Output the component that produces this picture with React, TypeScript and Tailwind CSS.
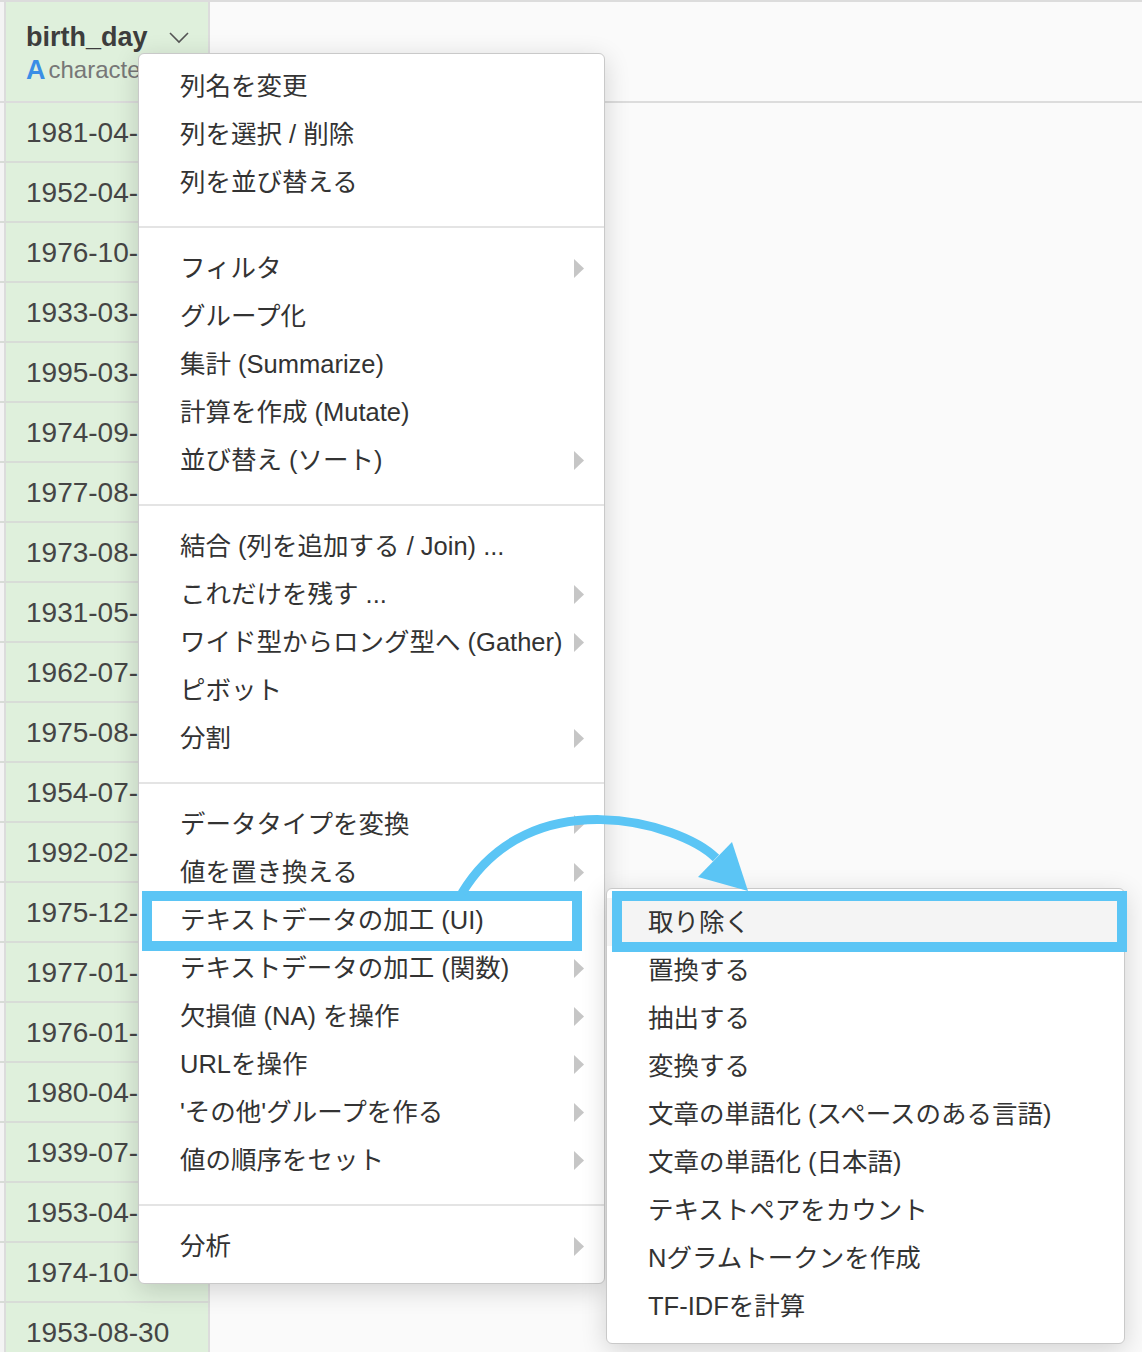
const FONT = 'font-["Liberation_Sans","Noto_Sans_CJK_JP",sans-serif]';

const dates = [
  '1981-04-12', '1952-04-03', '1976-10-21', '1933-03-09', '1995-03-17', '1974-09-28', '1977-08-05',
  '1973-08-14', '1931-05-30', '1962-07-19', '1975-08-08', '1954-07-25', '1992-02-11', '1975-12-02',
  '1977-01-16', '1976-01-27', '1980-04-06', '1939-07-13', '1953-04-22', '1974-10-01', '1953-08-30',
];

type Item = { label: string; sub?: boolean; mark?: boolean };

const sections: Item[][] = [
  [{ label: '列名を変更' }, { label: '列を選択 / 削除' }, { label: '列を並び替える' }],
  [
    { label: 'フィルタ', sub: true },
    { label: 'グループ化' },
    { label: '集計 (Summarize)' },
    { label: '計算を作成 (Mutate)' },
    { label: '並び替え (ソート)', sub: true },
  ],
  [
    { label: '結合 (列を追加する / Join) ...' },
    { label: 'これだけを残す ...', sub: true },
    { label: 'ワイド型からロング型へ (Gather)', sub: true },
    { label: 'ピボット' },
    { label: '分割', sub: true },
  ],
  [
    { label: 'データタイプを変換', sub: true },
    { label: '値を置き換える', sub: true },
    { label: 'テキストデータの加工 (UI)', mark: true },
    { label: 'テキストデータの加工 (関数)', sub: true },
    { label: '欠損値 (NA) を操作', sub: true },
    { label: 'URLを操作', sub: true },
    { label: "'その他'グループを作る", sub: true },
    { label: '値の順序をセット', sub: true },
  ],
  [{ label: '分析', sub: true }],
];

const subItems = [
  '取り除く',
  '置換する',
  '抽出する',
  '変換する',
  '文章の単語化 (スペースのある言語)',
  '文章の単語化 (日本語)',
  'テキストペアをカウント',
  'Nグラムトークンを作成',
  'TF-IDFを計算',
];

export default function App() {
  return (
    <div
      className={`relative h-[1352px] w-[1142px] overflow-hidden border-t-2 border-[#dcdcdc] bg-[#fafafa] ${FONT}`}
    >
      {/* header row */}
      <div className="flex h-[101px] border-b-2 border-[#dcdcdc]">
        <div className="w-[4px] shrink-0 bg-[#f4f4f4]" />
        <div className="w-[206px] shrink-0 border-x-2 border-[#dcdcdc] bg-[#dff0dc] pl-[20px] pt-[19px]">
          <div className="flex h-[32px] items-center">
            <span className="text-[27px] font-bold leading-[32px] text-[#3d3d3d]">birth_day</span>
            <svg width="22" height="14" viewBox="0 0 22 14" className="ml-[20px] mt-[2px]" aria-hidden>
              <path d="M2 2 L11 11 L20 2" fill="none" stroke="#555" strokeWidth="1.6" />
            </svg>
          </div>
          <div className="mt-[3px] flex h-[28px] items-center whitespace-nowrap">
            <span className="text-[27px] font-bold leading-[28px] text-[#3a8ee6]">A</span>
            <span className="ml-[3px] text-[24px] leading-[28px] text-[#777]">character</span>
          </div>
        </div>
        <div className="flex-1" />
      </div>

      {/* data rows */}
      {dates.map((d) => (
        <div key={d} className="flex h-[60px] w-[210px] border-b-2 border-[#d8dcd7]">
          <div className="w-[4px] shrink-0 bg-[#f4f4f4]" />
          <div className="flex flex-1 items-center border-x-2 border-[#dcdcdc] bg-[#dff0dc] pl-[20px] pt-[2px] text-[28px] text-[#454545]">
            {d}
          </div>
        </div>
      ))}

      {/* column menu */}
      <div className="absolute left-[138px] top-[51px] w-[467px] rounded-[6px] border border-[#c9c9c9] bg-white pb-[13px] pt-[8px] shadow-[0_6px_26px_rgba(0,0,0,0.16)]">
        {sections.map((sec, i) => (
          <div key={i}>
            {i > 0 && <div className="mb-[16px] mt-[20px] h-[2px] bg-[#e4e4e4]" />}
            {sec.map((it) => (
              <div
                key={it.label}
                className="relative flex h-[48px] items-center justify-between pl-[41px] pr-[20px] text-[25.5px] text-[#333]"
              >
                <span className="whitespace-nowrap">{it.label}</span>
                {it.sub && <Caret />}
                {it.mark && (
                  <span className="absolute -bottom-[7px] -top-[5px] left-[3px] right-[22px] border-[10px] border-[#5bc5f5]" />
                )}
              </div>
            ))}
          </div>
        ))}
      </div>

      {/* submenu */}
      <div className="absolute left-[606px] top-[886px] w-[519px] rounded-[6px] border border-[#c9c9c9] bg-white pb-[13px] pt-[9px] shadow-[0_6px_26px_rgba(0,0,0,0.16)]">
        {subItems.map((s, i) => (
          <div
            key={s}
            className={`relative flex h-[48px] items-center pl-[41px] text-[25.5px] text-[#333] ${
              i === 0 ? 'bg-[#f4f4f4]' : ''
            }`}
          >
            <span className="whitespace-nowrap">{s}</span>
            {i === 0 && (
              <span className="absolute -bottom-[6px] -right-[3px] -top-[7px] left-[5px] border-[10px] border-[#5bc5f5]" />
            )}
          </div>
        ))}
      </div>

      {/* callout arrow */}
      <svg
        className="pointer-events-none absolute -top-[2px] left-0"
        width="1142"
        height="1352"
        viewBox="0 0 1142 1352"
        aria-hidden
      >
        <path d="M462 893 C530 780 680 822 716 858" fill="none" stroke="#5bc5f5" strokeWidth="9" />
        <polygon points="748,891 698,877 732,842" fill="#5bc5f5" />
      </svg>
    </div>
  );
}

function Caret() {
  return (
    <svg width="10" height="19" viewBox="0 0 10 19" aria-hidden>
      <polygon points="0,0 10,9.5 0,19" fill="#c6c6c6" />
    </svg>
  );
}
